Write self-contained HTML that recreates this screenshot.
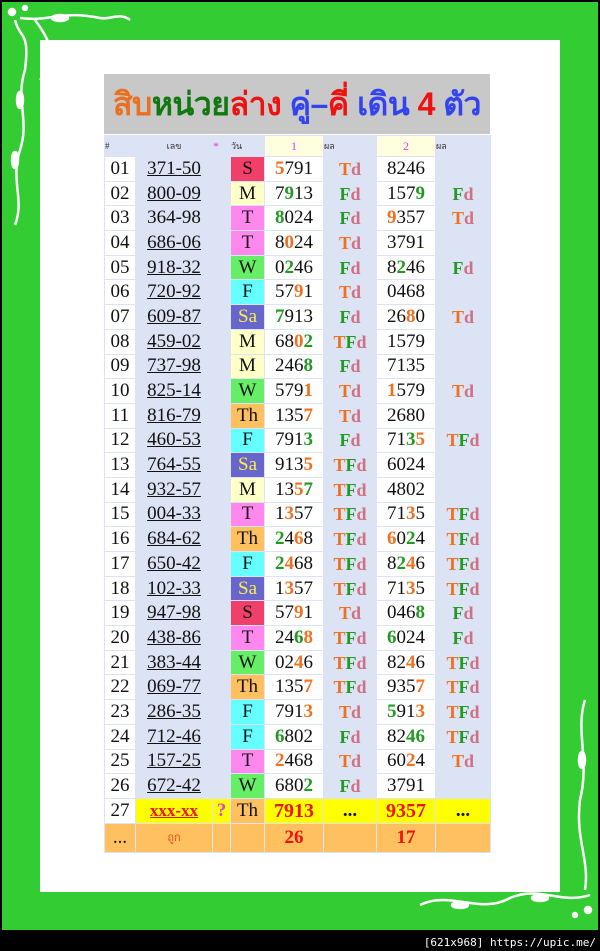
<!DOCTYPE html>
<html><head><meta charset="utf-8"><style>
body{margin:0;width:600px;height:951px;background:#000;position:relative;overflow:hidden;font-family:"Liberation Serif",serif}
#g{position:absolute;left:2px;top:2px;width:596px;height:928px;background:#33cc33}
#w{position:absolute;left:40px;top:40px;width:520px;height:852px;background:#fff}
#title{position:absolute;left:104px;top:74px;width:386px;height:60px;background:#c8c8c8;font-family:"Liberation Sans","Noto Sans CJK SC",sans-serif;font-weight:bold;font-size:32px;line-height:60px;white-space:nowrap;text-align:center;letter-spacing:-0.5px;overflow:hidden}
table{position:absolute;left:104px;top:135px;width:386px;border-collapse:collapse;table-layout:fixed;background:#dce3f5}
td{padding:0;height:23.7px;border:1px solid #dce3f5;text-align:center;font-size:19px;color:#111;line-height:20px;white-space:nowrap;overflow:hidden}
tr.h td{height:20px;font-size:9px;color:#333;text-align:left}
.wt{background:#fff}
.n{text-decoration:underline}
.o{color:#f07020;font-weight:bold}.g{color:#229922;font-weight:bold}
.r{font-weight:bold;font-size:18px;font-family:"Liberation Serif",serif}
.r .d{color:#d07080}
.S{background:#f0406a}.M{background:#ffffc8}.T{background:#ff88ee}.W{background:#66ee66}.F{background:#66ffff}.Sa{background:#6666cc;color:#ffee44}.Th{background:#ffc060}
tr.y td{background:#ffff00}
tr.y .big{color:#ee1111;font-weight:bold;font-size:20px}
tr.f td{background:#ffc060;height:28px}
#bar{position:absolute;right:4px;bottom:2px;color:#fff;font-family:"DejaVu Sans Mono",monospace;font-size:11px}
</style></head><body>
<div id="g"></div>
<svg style="position:absolute;left:0;top:0" width="600" height="930" fill="none" stroke="#fff" stroke-width="2.5">
<path d="M15 20 C20 40 30 30 25 70 C15 100 30 120 20 150 C10 180 25 200 15 225"/>
<path d="M20 18 C50 22 60 10 100 18 C110 20 120 12 130 20"/>
<path d="M35 20 C50 40 60 60 40 80"/>
<circle cx="12" cy="12" r="3" fill="#fff"/><circle cx="25" cy="8" r="2" fill="#fff"/>
<ellipse cx="60" cy="18" rx="8" ry="3" fill="#fff"/><ellipse cx="20" cy="100" rx="3" ry="8" fill="#fff"/><ellipse cx="15" cy="160" rx="3" ry="8" fill="#fff"/>
<path d="M585 700 C575 730 590 760 580 800 C575 840 590 860 585 890"/>
<path d="M420 905 C450 890 480 915 510 898 C540 885 560 905 590 895"/>
<circle cx="588" cy="910" r="3" fill="#fff"/><circle cx="575" cy="915" r="2" fill="#fff"/>
<ellipse cx="460" cy="905" rx="8" ry="3" fill="#fff"/><ellipse cx="582" cy="760" rx="3" ry="8" fill="#fff"/><ellipse cx="540" cy="898" rx="8" ry="3" fill="#fff"/>
</svg>
<div id="w"></div>
<div id="title"><span style="color:#e87020">สิบ</span><span style="color:#117711">หน่วย</span><span style="color:#ee1111">ล่าง</span> <span style="color:#3344ee">คู่–</span><span style="color:#ee1111">คี่</span> <span style="color:#3344ee">เดิน</span> <span style="color:#ee1111">4</span> <span style="color:#3344ee">ตัว</span></div>
<table>
<colgroup><col style="width:31px"><col style="width:77px"><col style="width:18px"><col style="width:34px"><col style="width:59px"><col style="width:53px"><col style="width:59px"><col style="width:55px"></colgroup>
<tr class="h"><td>#</td><td style="text-align:center">เลข</td><td style="color:#e040e0;font-size:12px">*</td><td>วัน</td><td style="background:#ffffe0;text-align:center;color:#e040e0;font-size:12px">1</td><td>ผล</td><td style="background:#ffffe0;text-align:center;color:#e040e0;font-size:12px">2</td><td>ผล</td></tr>
<tr><td class="wt">01</td><td class="n">371-50</td><td></td><td class="S">S</td><td class="wt"><span class="o">5</span>791</td><td class="r"><span class="o">T</span><span class="d">d</span></td><td class="wt">8246</td><td></td></tr>
<tr><td class="wt">02</td><td class="n">800-09</td><td></td><td class="M">M</td><td class="wt">7<span class="g">9</span>13</td><td class="r"><span class="g">F</span><span class="d">d</span></td><td class="wt">157<span class="g">9</span></td><td class="r"><span class="g">F</span><span class="d">d</span></td></tr>
<tr><td class="wt">03</td><td class="n" style="text-decoration:none">364-98</td><td></td><td class="T">T</td><td class="wt"><span class="g">8</span>024</td><td class="r"><span class="g">F</span><span class="d">d</span></td><td class="wt"><span class="o">9</span>357</td><td class="r"><span class="o">T</span><span class="d">d</span></td></tr>
<tr><td class="wt">04</td><td class="n">686-06</td><td></td><td class="T">T</td><td class="wt">8<span class="o">0</span>24</td><td class="r"><span class="o">T</span><span class="d">d</span></td><td class="wt">3791</td><td></td></tr>
<tr><td class="wt">05</td><td class="n">918-32</td><td></td><td class="W">W</td><td class="wt">0<span class="g">2</span>46</td><td class="r"><span class="g">F</span><span class="d">d</span></td><td class="wt">8<span class="g">2</span>46</td><td class="r"><span class="g">F</span><span class="d">d</span></td></tr>
<tr><td class="wt">06</td><td class="n">720-92</td><td></td><td class="F">F</td><td class="wt">57<span class="o">9</span>1</td><td class="r"><span class="o">T</span><span class="d">d</span></td><td class="wt">0468</td><td></td></tr>
<tr><td class="wt">07</td><td class="n">609-87</td><td></td><td class="Sa">Sa</td><td class="wt"><span class="g">7</span>913</td><td class="r"><span class="g">F</span><span class="d">d</span></td><td class="wt">26<span class="o">8</span>0</td><td class="r"><span class="o">T</span><span class="d">d</span></td></tr>
<tr><td class="wt">08</td><td class="n">459-02</td><td></td><td class="M">M</td><td class="wt">68<span class="o">0</span><span class="g">2</span></td><td class="r"><span class="o">T</span><span class="g">F</span><span class="d">d</span></td><td class="wt">1579</td><td></td></tr>
<tr><td class="wt">09</td><td class="n">737-98</td><td></td><td class="M">M</td><td class="wt">246<span class="g">8</span></td><td class="r"><span class="g">F</span><span class="d">d</span></td><td class="wt">7135</td><td></td></tr>
<tr><td class="wt">10</td><td class="n">825-14</td><td></td><td class="W">W</td><td class="wt">579<span class="o">1</span></td><td class="r"><span class="o">T</span><span class="d">d</span></td><td class="wt"><span class="o">1</span>579</td><td class="r"><span class="o">T</span><span class="d">d</span></td></tr>
<tr><td class="wt">11</td><td class="n">816-79</td><td></td><td class="Th">Th</td><td class="wt">135<span class="o">7</span></td><td class="r"><span class="o">T</span><span class="d">d</span></td><td class="wt">2680</td><td></td></tr>
<tr><td class="wt">12</td><td class="n">460-53</td><td></td><td class="F">F</td><td class="wt">791<span class="g">3</span></td><td class="r"><span class="g">F</span><span class="d">d</span></td><td class="wt">71<span class="g">3</span><span class="o">5</span></td><td class="r"><span class="o">T</span><span class="g">F</span><span class="d">d</span></td></tr>
<tr><td class="wt">13</td><td class="n">764-55</td><td></td><td class="Sa">Sa</td><td class="wt">913<span class="o">5</span></td><td class="r"><span class="o">T</span><span class="g">F</span><span class="d">d</span></td><td class="wt">6024</td><td></td></tr>
<tr><td class="wt">14</td><td class="n">932-57</td><td></td><td class="M">M</td><td class="wt">13<span class="o">5</span><span class="g">7</span></td><td class="r"><span class="o">T</span><span class="g">F</span><span class="d">d</span></td><td class="wt">4802</td><td></td></tr>
<tr><td class="wt">15</td><td class="n">004-33</td><td></td><td class="T">T</td><td class="wt">1<span class="o">3</span>57</td><td class="r"><span class="o">T</span><span class="g">F</span><span class="d">d</span></td><td class="wt">71<span class="o">3</span>5</td><td class="r"><span class="o">T</span><span class="g">F</span><span class="d">d</span></td></tr>
<tr><td class="wt">16</td><td class="n">684-62</td><td></td><td class="Th">Th</td><td class="wt"><span class="g">2</span>4<span class="o">6</span>8</td><td class="r"><span class="o">T</span><span class="g">F</span><span class="d">d</span></td><td class="wt"><span class="o">6</span>0<span class="g">2</span>4</td><td class="r"><span class="o">T</span><span class="g">F</span><span class="d">d</span></td></tr>
<tr><td class="wt">17</td><td class="n">650-42</td><td></td><td class="F">F</td><td class="wt"><span class="g">2</span><span class="o">4</span>68</td><td class="r"><span class="o">T</span><span class="g">F</span><span class="d">d</span></td><td class="wt">8<span class="g">2</span><span class="o">4</span>6</td><td class="r"><span class="o">T</span><span class="g">F</span><span class="d">d</span></td></tr>
<tr><td class="wt">18</td><td class="n">102-33</td><td></td><td class="Sa">Sa</td><td class="wt">1<span class="o">3</span>57</td><td class="r"><span class="o">T</span><span class="g">F</span><span class="d">d</span></td><td class="wt">71<span class="o">3</span>5</td><td class="r"><span class="o">T</span><span class="g">F</span><span class="d">d</span></td></tr>
<tr><td class="wt">19</td><td class="n">947-98</td><td></td><td class="S">S</td><td class="wt">57<span class="o">9</span>1</td><td class="r"><span class="o">T</span><span class="d">d</span></td><td class="wt">046<span class="g">8</span></td><td class="r"><span class="g">F</span><span class="d">d</span></td></tr>
<tr><td class="wt">20</td><td class="n">438-86</td><td></td><td class="T">T</td><td class="wt">24<span class="g">6</span><span class="o">8</span></td><td class="r"><span class="o">T</span><span class="g">F</span><span class="d">d</span></td><td class="wt"><span class="g">6</span>024</td><td class="r"><span class="g">F</span><span class="d">d</span></td></tr>
<tr><td class="wt">21</td><td class="n">383-44</td><td></td><td class="W">W</td><td class="wt">02<span class="o">4</span>6</td><td class="r"><span class="o">T</span><span class="g">F</span><span class="d">d</span></td><td class="wt">82<span class="o">4</span>6</td><td class="r"><span class="o">T</span><span class="g">F</span><span class="d">d</span></td></tr>
<tr><td class="wt">22</td><td class="n">069-77</td><td></td><td class="Th">Th</td><td class="wt">135<span class="o">7</span></td><td class="r"><span class="o">T</span><span class="g">F</span><span class="d">d</span></td><td class="wt">935<span class="o">7</span></td><td class="r"><span class="o">T</span><span class="g">F</span><span class="d">d</span></td></tr>
<tr><td class="wt">23</td><td class="n">286-35</td><td></td><td class="F">F</td><td class="wt">791<span class="o">3</span></td><td class="r"><span class="o">T</span><span class="d">d</span></td><td class="wt"><span class="g">5</span>91<span class="o">3</span></td><td class="r"><span class="o">T</span><span class="g">F</span><span class="d">d</span></td></tr>
<tr><td class="wt">24</td><td class="n">712-46</td><td></td><td class="F">F</td><td class="wt"><span class="g">6</span>802</td><td class="r"><span class="g">F</span><span class="d">d</span></td><td class="wt">82<span class="g">46</span></td><td class="r"><span class="o">T</span><span class="g">F</span><span class="d">d</span></td></tr>
<tr><td class="wt">25</td><td class="n">157-25</td><td></td><td class="T">T</td><td class="wt"><span class="o">2</span>468</td><td class="r"><span class="o">T</span><span class="d">d</span></td><td class="wt">60<span class="o">2</span>4</td><td class="r"><span class="o">T</span><span class="d">d</span></td></tr>
<tr><td class="wt">26</td><td class="n">672-42</td><td></td><td class="W">W</td><td class="wt">680<span class="g">2</span></td><td class="r"><span class="g">F</span><span class="d">d</span></td><td class="wt">3791</td><td></td></tr>
<tr class="y"><td style="background:#fff">27</td><td class="n big" style="font-size:17px">xxx-xx</td><td style="color:#e040e0;font-weight:bold">?</td><td style="background:#ffc060">Th</td><td class="big">7913</td><td style="font-weight:bold">...</td><td class="big">9357</td><td style="font-weight:bold">...</td></tr>
<tr class="f"><td>...</td><td style="font-size:11px;color:#e05020">ถูก</td><td></td><td></td><td style="color:#ee1111;font-weight:bold">26</td><td></td><td style="color:#ee1111;font-weight:bold">17</td><td></td></tr>
</table>
<div id="bar">[621x968] https://upic.me/</div>
</body></html>
